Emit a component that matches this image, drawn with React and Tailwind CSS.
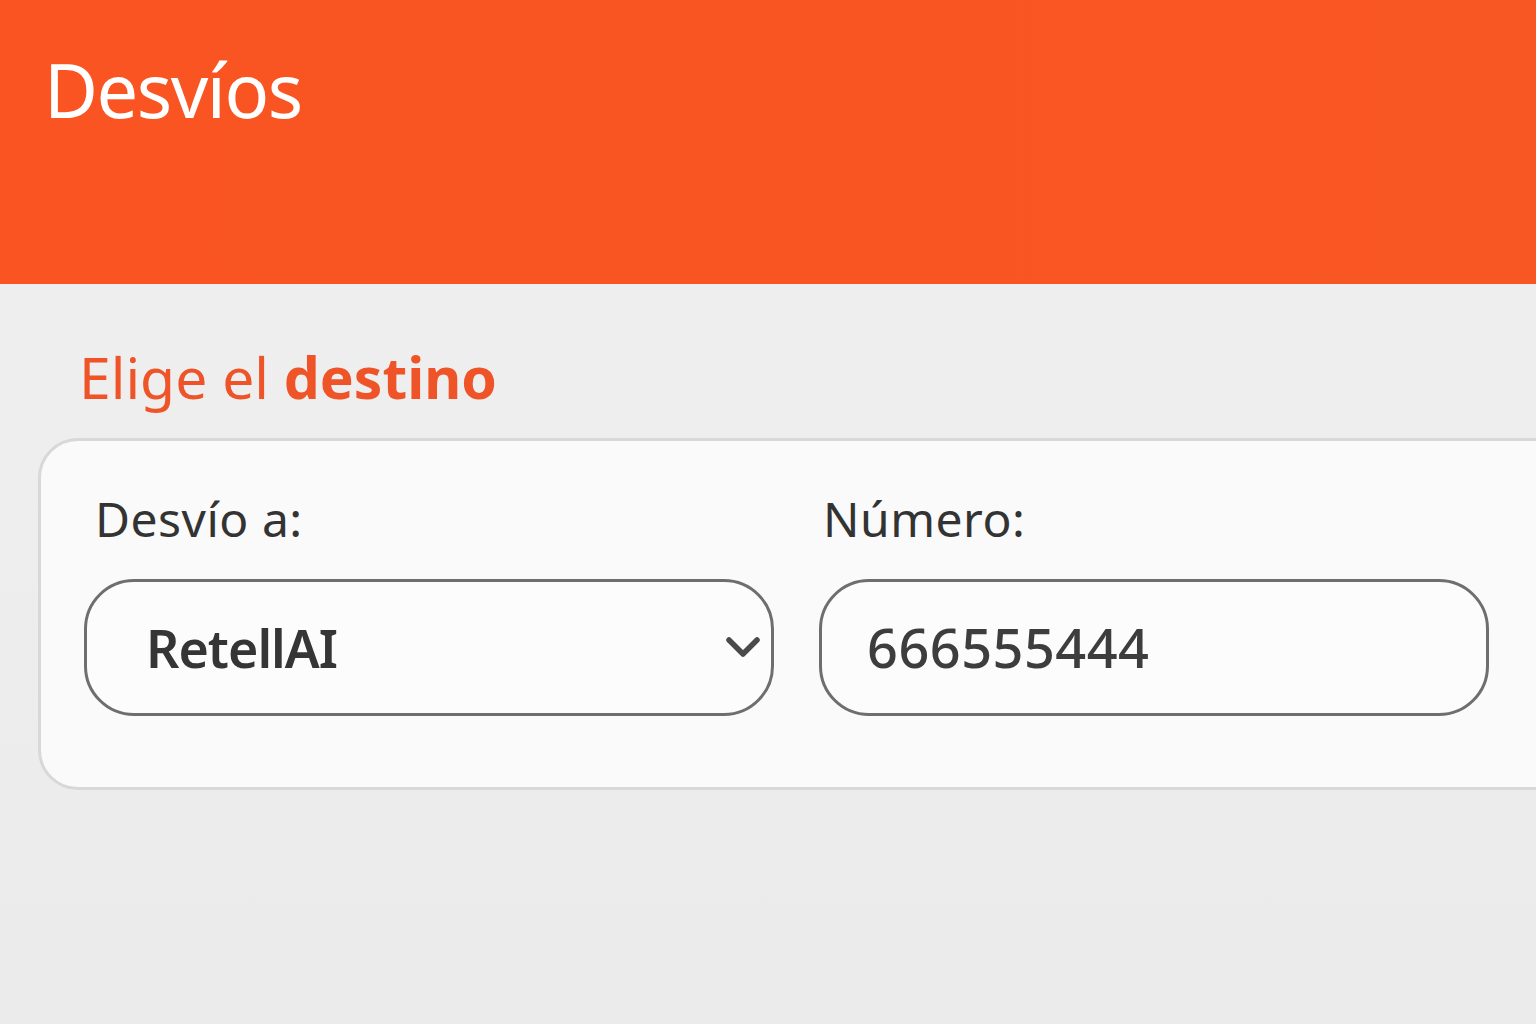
import React from "react";

export default function App() {
  return (
    <div
      className="w-[1536px] h-[1024px] overflow-hidden bg-gradient-to-b from-[#f0f0f0] to-[#ebebeb] flex flex-col"
      style={{ fontFamily: '"Noto Sans", "Open Sans", sans-serif' }}
    >
      <header className="h-[284px] shrink-0 bg-gradient-to-r from-[#f95421] to-[#f85623] pl-[44px] pt-[44px]">
        <h1 className="text-white text-[74px] leading-[92px] font-normal tracking-[-1.5px]">Desvíos</h1>
      </header>
      <main className="pl-[38px] pt-[46px]">
        <h2 className="pl-[41px] text-[#ef5428] text-[57px] leading-[94px] tracking-[0px]">
          Elige el <span className="font-bold">destino</span>
        </h2>
        <section className="mt-[14px] w-[1540px] h-[352px] rounded-[40px] border-[3px] border-[#d8d8d8] bg-[#fafafa] pl-[43px] pt-[48px]">
          <div className="grid grid-cols-[690px_670px] gap-x-[45px]">
            <div className="flex flex-col">
              <label className="pl-[11px] text-[#333] text-[48px] leading-[60px] tracking-[0.5px]">Desvío a:</label>
              <div className="mt-[30px] h-[137px] rounded-[50px] border-[3px] border-[#6e6e6e] bg-[#fcfcfc] flex items-center justify-between pl-[59px] pr-[10px]">
                <span className="text-[#353535] text-[52px] font-semibold tracking-[-1px]">RetellAI</span>
                <svg width="36" height="26" viewBox="0 0 36 26" fill="none" className="mt-[-2px]">
                  <path d="M4 6 L18 20 L32 6" stroke="#4a4a4a" strokeWidth="5.5" strokeLinecap="round" strokeLinejoin="round" />
                </svg>
              </div>
            </div>
            <div className="flex flex-col">
              <label className="pl-[4px] text-[#333] text-[48px] leading-[60px] tracking-[0.5px]">Número:</label>
              <div className="mt-[30px] h-[137px] rounded-[50px] border-[3px] border-[#6e6e6e] bg-[#fcfcfc] flex items-center pl-[45px]">
                <span className="text-[#3d3d3d] text-[54px] font-medium tracking-[0.5px]">666555444</span>
              </div>
            </div>
          </div>
        </section>
      </main>
    </div>
  );
}
